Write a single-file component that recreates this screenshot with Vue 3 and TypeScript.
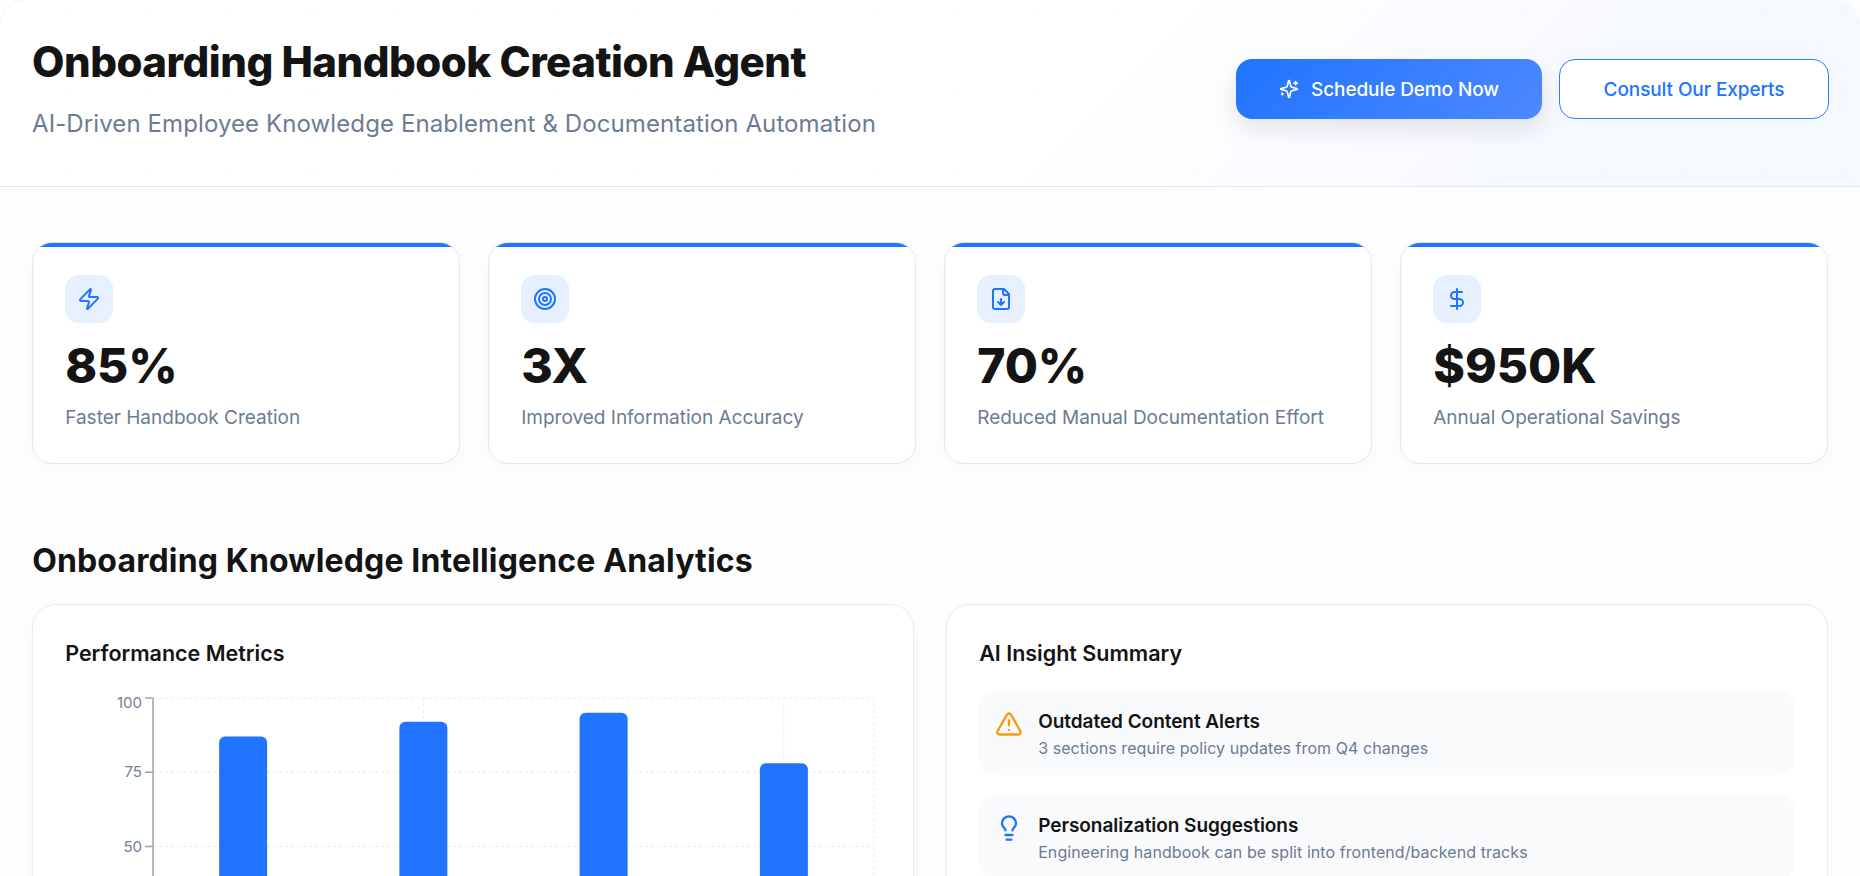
<script setup lang="ts">
interface Stat {
  icon: string
  value: string
  label: string
}

const stats: Stat[] = [
  { icon: 'bolt', value: '85%', label: 'Faster Handbook Creation' },
  { icon: 'target', value: '3X', label: 'Improved Information Accuracy' },
  { icon: 'file', value: '70%', label: 'Reduced Manual Documentation Effort' },
  { icon: 'dollar', value: '$950K', label: 'Annual Operational Savings' },
]

// chart plot box in svg units
const plotTop = 8
const plotHeight = 297
const plotLeft = 88
const plotWidth = 721
const slot = plotWidth / 4
const ticks = [100, 75, 50, 25, 0]
const values = [87, 92, 95, 78]
const yFor = (v: number) => plotTop + plotHeight * (1 - v / 100)
// the top label sits a little below its tick
const labelY = (t: number) => yFor(t) + (t === 100 ? 10 : 5)
const bars = values.map((v, i) => ({
  x: plotLeft + slot * i + slot / 2 - 24,
  y: yFor(v),
  h: (plotHeight * v) / 100,
}))
const gridX = [plotLeft + slot * 1.5, plotLeft + slot * 3.5, plotLeft + plotWidth]
</script>

<template>
  <div class="page">
    <header class="hero">
      <div>
        <h1>Onboarding Handbook Creation Agent</h1>
        <p class="subtitle">AI-Driven Employee Knowledge Enablement &amp; Documentation Automation</p>
      </div>
      <div class="actions">
        <button class="btn primary">
          <svg viewBox="0 0 24 24" width="20" height="20" fill="none" stroke="currentColor" stroke-width="2" stroke-linecap="round" stroke-linejoin="round">
            <path d="M9.9 15.5a2 2 0 0 0-1.4-1.4l-6.1-1.6a.5.5 0 0 1 0-1l6.1-1.6a2 2 0 0 0 1.4-1.4l1.6-6.1a.5.5 0 0 1 1 0l1.6 6.1a2 2 0 0 0 1.4 1.4l6.1 1.6a.5.5 0 0 1 0 1l-6.1 1.6a2 2 0 0 0-1.4 1.4l-1.6 6.1a.5.5 0 0 1-1 0z" />
            <path d="M20 3v4M22 5h-4M4 17v2M5 18H3" />
          </svg>
          Schedule Demo Now
        </button>
        <button class="btn outline">Consult Our Experts</button>
      </div>
    </header>

    <main class="content">
      <section class="stats">
        <article v-for="s in stats" :key="s.label" class="stat">
          <div class="stat-icon">
            <svg viewBox="0 0 24 24" width="24" height="24" fill="none" stroke="currentColor" stroke-width="2" stroke-linecap="round" stroke-linejoin="round">
              <path v-if="s.icon === 'bolt'" d="M4 14a1 1 0 0 1-.78-1.63l9.9-10.2a.5.5 0 0 1 .86.46l-1.92 6.02A1 1 0 0 0 13 10h7a1 1 0 0 1 .78 1.63l-9.9 10.2a.5.5 0 0 1-.86-.46l1.92-6.02A1 1 0 0 0 11 14z" />
              <template v-else-if="s.icon === 'target'">
                <circle cx="12" cy="12" r="10" />
                <circle cx="12" cy="12" r="6" />
                <circle cx="12" cy="12" r="2" />
              </template>
              <template v-else-if="s.icon === 'file'">
                <path d="M15 2H6a2 2 0 0 0-2 2v16a2 2 0 0 0 2 2h12a2 2 0 0 0 2-2V7z" />
                <path d="M14 2v4a2 2 0 0 0 2 2h4" />
                <path d="M12 12v6M15 15l-3 3-3-3" />
              </template>
              <template v-else>
                <line x1="12" x2="12" y1="2" y2="22" />
                <path d="M17 5H9.5a3.5 3.5 0 0 0 0 7h5a3.5 3.5 0 0 1 0 7H6" />
              </template>
            </svg>
          </div>
          <div class="stat-value">{{ s.value }}</div>
          <div class="stat-label">{{ s.label }}</div>
        </article>
      </section>

      <h2 class="section-title">Onboarding Knowledge Intelligence Analytics</h2>

      <section class="panels">
        <div class="panel">
          <h3>Performance Metrics</h3>
          <svg class="chart" width="816" height="320" viewBox="0 0 816 320">
            <g class="grid">
              <line v-for="t in ticks" :key="t" :x1="plotLeft" :x2="plotLeft + plotWidth" :y1="yFor(t)" :y2="yFor(t)" />
              <line v-for="x in gridX" :key="x" :x1="x" :x2="x" :y1="plotTop" :y2="plotTop + plotHeight" />
            </g>
            <rect v-for="b in bars" :key="b.x" class="bar" :x="b.x" :y="b.y" width="48" :height="b.h + 8" rx="6" />
            <line class="axis" :x1="plotLeft" :x2="plotLeft" :y1="plotTop" :y2="plotTop + plotHeight" />
            <g v-for="t in ticks" :key="'t' + t">
              <line class="axis" :x1="plotLeft - 8" :x2="plotLeft" :y1="yFor(t)" :y2="yFor(t)" />
              <text class="tick" :x="plotLeft - 11" :y="labelY(t)" text-anchor="end">{{ t }}</text>
            </g>
          </svg>
        </div>

        <div class="panel">
          <h3>AI Insight Summary</h3>
          <div class="insights">
            <div class="insight">
              <svg class="warn" viewBox="0 0 24 24" width="28" height="28" fill="none" stroke="currentColor" stroke-width="2" stroke-linecap="round" stroke-linejoin="round">
                <path d="m21.73 18-8-14a2 2 0 0 0-3.48 0l-8 14A2 2 0 0 0 4 21h16a2 2 0 0 0 1.73-3" />
                <path d="M12 9v4M12 17h.01" />
              </svg>
              <div>
                <div class="insight-title">Outdated Content Alerts</div>
                <div class="insight-text">3 sections require policy updates from Q4 changes</div>
              </div>
            </div>
            <div class="insight">
              <svg class="bulb" viewBox="0 0 24 24" width="28" height="28" fill="none" stroke="currentColor" stroke-width="2" stroke-linecap="round" stroke-linejoin="round">
                <path d="M15 14c.2-1 .7-1.7 1.5-2.5 1-.9 1.5-2.2 1.5-3.5A6 6 0 0 0 6 8c0 1 .2 2.2 1.5 3.5.7.7 1.3 1.5 1.5 2.5" />
                <path d="M9 18h6M10 22h4" />
              </svg>
              <div>
                <div class="insight-title">Personalization Suggestions</div>
                <div class="insight-text">Engineering handbook can be split into frontend/backend tracks</div>
              </div>
            </div>
          </div>
        </div>
      </section>
    </main>
  </div>
</template>

<style scoped>
.page {
  height: 876px;
  overflow: hidden;
  font-family: Inter, "Noto Sans", sans-serif;
  color: #141414;
  background: #fefeff;
}

.hero {
  position: relative;
  height: 187px;
  box-sizing: border-box;
  padding: 0 31px 9px 32px;
  display: flex;
  align-items: center;
  justify-content: space-between;
  border-bottom: 1px solid #e1e7f3;
  border-radius: 24px 24px 0 0;
  background:
    radial-gradient(circle, rgba(90, 120, 190, 0.05) 1px, transparent 1.5px) 29.66px -29.3px / 80.68px 80.68px,
    linear-gradient(135deg, #fff 58%, #f5f8ff 85%);
}

/* faint corner arc, top left */
.hero::before {
  content: "";
  position: absolute;
  top: 0;
  left: 0;
  width: 24px;
  height: 24px;
  box-sizing: border-box;
  border-top: 1px dotted #e6eaf2;
  border-left: 1px dotted #e6eaf2;
  border-radius: 24px 0 0 0;
}

h1 {
  margin: -1px 0 0;
  font-size: 42px;
  font-weight: 800;
  line-height: 50px;
  letter-spacing: -0.5px;
}

.subtitle {
  margin: 21px 0 0;
  font-size: 24px;
  line-height: 32px;
  color: #6b7c93;
  letter-spacing: 0.1px;
}

.actions {
  display: flex;
  gap: 17px;
  margin-top: 1px;
}

.btn {
  height: 60px;
  box-sizing: border-box;
  border-radius: 16px;
  font-family: inherit;
  font-size: 19px;
  letter-spacing: -0.1px;
  font-weight: 500;
  display: flex;
  align-items: center;
  justify-content: center;
  gap: 12px;
}

.primary {
  width: 306px;
  border: 0;
  color: #fff;
  background: linear-gradient(135deg, #2074ff, #4d88ff);
  box-shadow: 0 10px 24px rgba(15, 23, 42, 0.1);
}

.outline {
  width: 270px;
  color: #2074ff;
  background: #fff;
  border: 1.5px solid #2f7cff;
}

.content {
  padding: 55px 31.8px 0 32.2px;
}

.stats {
  display: grid;
  grid-template-columns: repeat(4, 1fr);
  gap: 28px;
}

.stat {
  position: relative;
  overflow: hidden;
  box-sizing: border-box;
  height: 222px;
  padding: 32px;
  background: #fff;
  border: 1px solid #e1e8f5;
  border-radius: 20px;
  box-shadow: 0 4px 16px rgba(40, 70, 130, 0.03);
}

.stat::before {
  content: "";
  position: absolute;
  top: 0;
  left: 0;
  right: 0;
  height: 4px;
  background: #2074ff;
}

.stat-icon {
  width: 48px;
  height: 48px;
  border-radius: 14px;
  background: #e6f0ff;
  color: #2074ff;
  display: flex;
  align-items: center;
  justify-content: center;
}

.stat-value {
  margin-top: 15px;
  font-size: 48px;
  line-height: 56px;
  font-weight: 800;
}

.stat-label {
  margin-top: 10px;
  font-size: 19px;
  line-height: 28px;
  color: #6b7c93;
}

.section-title {
  margin: 75px 0 0;
  font-size: 32px;
  line-height: 44px;
  font-weight: 700;
  letter-spacing: 0.14px;
}

.panels {
  margin-top: 21px;
  display: grid;
  grid-template-columns: 1fr 1fr;
  gap: 32px;
}

.panel {
  box-sizing: border-box;
  height: 500px;
  padding: 32px;
  background: #fff;
  border: 1px solid #e6ecf6;
  border-radius: 24px;
  box-shadow: 0 4px 16px rgba(40, 70, 130, 0.03);
}

h3 {
  margin: 0;
  font-size: 21.5px;
  line-height: 32px;
  font-weight: 600;
}

.chart {
  display: block;
  margin-top: 21px;
}

.grid line {
  stroke: #e6ebf5;
  stroke-width: 1;
  stroke-dasharray: 3 3;
}

.bar {
  fill: #2074ff;
}

.axis {
  stroke: #9ca3af;
  stroke-width: 1.5;
}

.tick {
  font-size: 15px;
  fill: #718096;
}

.insights {
  margin-top: 22px;
  display: flex;
  flex-direction: column;
  gap: 20px;
}

.insight {
  display: flex;
  gap: 15px;
  padding: 19px 16px;
  height: 84px;
  box-sizing: border-box;
  border-radius: 16px;
  background: #f8fafc;
}

.warn {
  color: #f59e0b;
  flex: none;
}

.bulb {
  color: #2074ff;
  flex: none;
}

.insight-title {
  font-size: 19px;
  line-height: 24px;
  font-weight: 600;
  letter-spacing: -0.05px;
}

.insight-text {
  margin-top: 2px;
  font-size: 16px;
  line-height: 24px;
  letter-spacing: 0.07px;
  color: #6b7c93;
}
</style>
